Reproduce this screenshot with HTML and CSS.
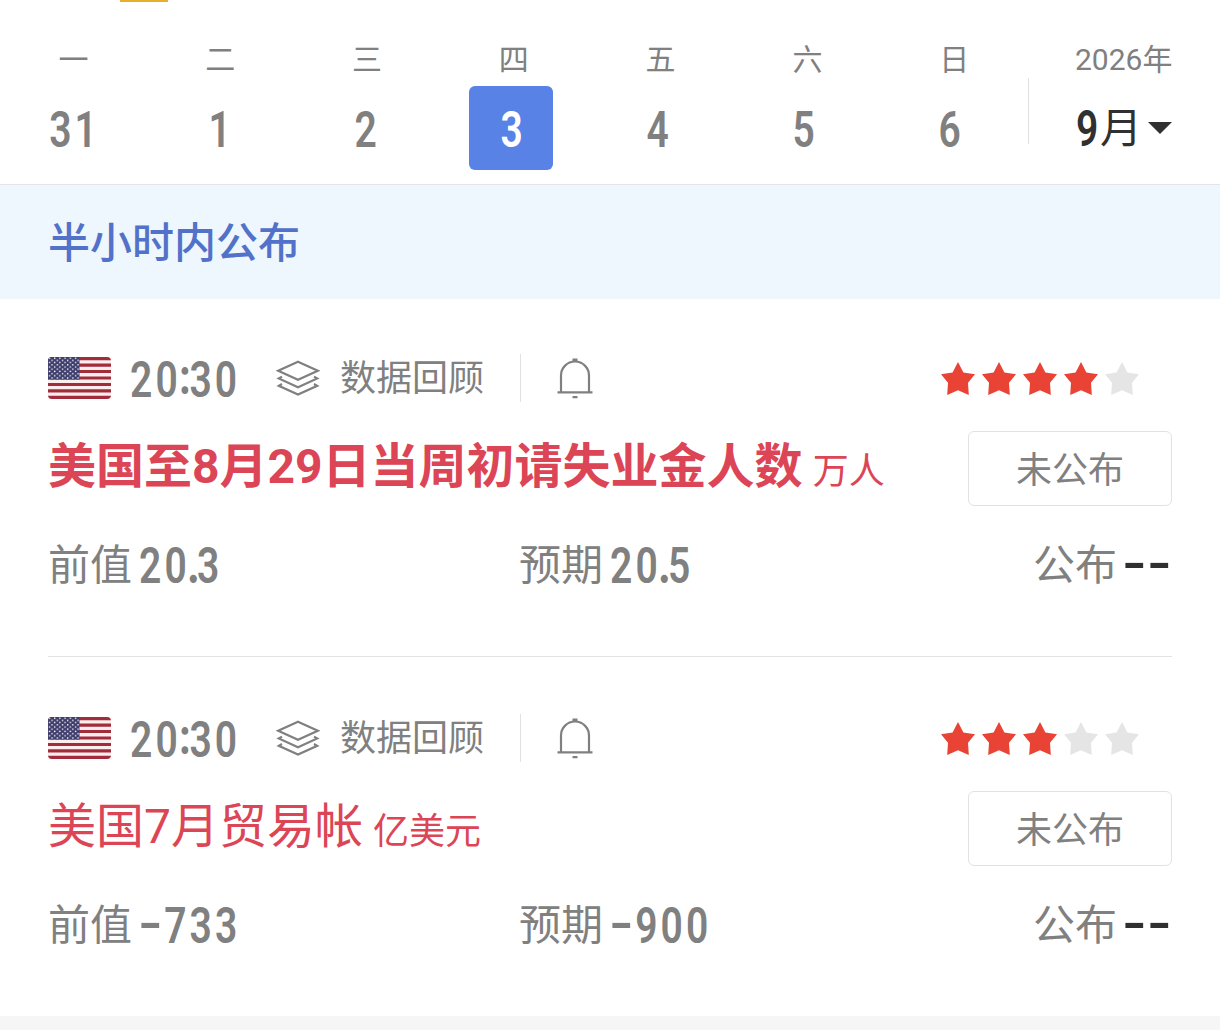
FILE: index.html
```html
<!DOCTYPE html>
<html lang="zh-CN">
<head>
<meta charset="utf-8">
<title>财经日历</title>
<link rel="stylesheet" href="styles.css">
</head>
<body>
<svg class="defs" width="0" height="0" aria-hidden="true">
  <defs>
    <pattern id="dots" width="5.2" height="4.4" patternUnits="userSpaceOnUse">
      <circle cx="1.5" cy="1.2" r=".8" fill="#fff"/><circle cx="4.1" cy="3.4" r=".8" fill="#fff"/>
    </pattern>
    <symbol id="flag" viewBox="0 0 63 42">
      <rect width="63" height="42" fill="#fdeeee"/>
      <path d="M0 1.6H63M0 8.1H63M0 14.5H63M0 21H63M0 27.5H63M0 33.9H63M0 40.4H63" stroke="#a02c3c" stroke-width="3.23"/>
      <rect width="31.5" height="22.6" fill="#3e3d6c"/>
      <rect width="31.5" height="22.6" fill="url(#dots)"/>
    </symbol>
    <symbol id="layers" viewBox="0 0 44 36">
      <g fill="none" stroke="#808080" stroke-width="2.2">
        <path d="M22 1.8L41.8 10.8L22 19.8L2.2 10.8Z"/>
        <path d="M6 16.6L2.8 18.4L22 27.2L41.2 18.4L38 16.6"/>
        <path d="M6 24L2.8 25.8L22 34.6L41.2 25.8L38 24"/>
      </g>
    </symbol>
    <symbol id="bell" viewBox="0 0 36 41">
      <path d="M4 34V17.5A14 14 0 0 1 32 17.5V34M.5 34.3H35.5" fill="none" stroke="#808080" stroke-width="2.2"/>
      <path d="M15.5 .5H20.5V3.5H15.5ZM15.5 38H20.5V40.3H15.5Z" fill="#808080"/>
    </symbol>
    <symbol id="star" viewBox="0 0 34 33">
      <path d="M17 0L22.4 10.6L34 12.2L27 20.8L27.8 33L17 28.2L6.2 33L7 20.8L0 12.2L11.6 10.6Z"/>
    </symbol>
  </defs>
</svg>

<header class="calendar">
  <div class="tab-line"></div>
  <div class="week">
    <div class="weekdays"><span>一</span><span>二</span><span>三</span><span>四</span><span>五</span><span>六</span><span>日</span></div>
    <div class="dates">
      <span class="date"><b class="num">31</b></span>
      <span class="date"><b class="num">1</b></span>
      <span class="date"><b class="num">2</b></span>
      <span class="date active"><b class="num">3</b></span>
      <span class="date"><b class="num">4</b></span>
      <span class="date"><b class="num">5</b></span>
      <span class="date"><b class="num">6</b></span>
    </div>
  </div>
  <div class="rule"></div>
  <div class="month">
    <div class="year">2026年</div>
    <div class="pick"><b class="num">9</b><span class="yue">月</span><i class="caret"></i></div>
  </div>
</header>

<h2 class="banner">半小时内公布</h2>

<main>
  <article class="event">
    <div class="meta">
      <svg class="flag"><use href="#flag"/></svg>
      <b class="num time">20<span class="colon">:</span>30</b>
      <svg class="layers"><use href="#layers"/></svg>
      <span class="review">数据回顾</span>
      <i class="sep"></i>
      <svg class="bell"><use href="#bell"/></svg>
      <div class="stars"><svg><use href="#star"/></svg><svg><use href="#star"/></svg><svg><use href="#star"/></svg><svg><use href="#star"/></svg><svg class="off"><use href="#star"/></svg></div>
    </div>
    <div class="headline">
      <h3 class="title strong">美国至8月29日当周初请失业金人数</h3><span class="unit">万人</span>
      <span class="status">未公布</span>
    </div>
    <div class="values">
      <div class="value prev"><span>前值</span><b class="num">20<span class="point">.</span>3</b></div>
      <div class="value"><span>预期</span><b class="num">20<span class="point">.</span>5</b></div>
      <div class="value actual"><span>公布</span><b class="num"><span class="dash">-</span><span class="dash">-</span></b></div>
    </div>
  </article>

  <article class="event">
    <div class="meta">
      <svg class="flag"><use href="#flag"/></svg>
      <b class="num time">20<span class="colon">:</span>30</b>
      <svg class="layers"><use href="#layers"/></svg>
      <span class="review">数据回顾</span>
      <i class="sep"></i>
      <svg class="bell"><use href="#bell"/></svg>
      <div class="stars"><svg><use href="#star"/></svg><svg><use href="#star"/></svg><svg><use href="#star"/></svg><svg class="off"><use href="#star"/></svg><svg class="off"><use href="#star"/></svg></div>
    </div>
    <div class="headline">
      <h3 class="title">美国7月贸易帐</h3><span class="unit">亿美元</span>
      <span class="status">未公布</span>
    </div>
    <div class="values">
      <div class="value prev"><span>前值</span><b class="num"><span class="dash">-</span>733</b></div>
      <div class="value"><span>预期</span><b class="num"><span class="dash">-</span>900</b></div>
      <div class="value actual"><span>公布</span><b class="num"><span class="dash">-</span><span class="dash">-</span></b></div>
    </div>
  </article>
</main>
<footer class="gap"></footer>
</body>
</html>
```
FILE: styles.css
```css
* { box-sizing: border-box; }

body {
  margin: 0;
  width: 1220px;
  height: 1030px;
  overflow: hidden;
  background: #fff;
  color: #808080;
  font-family: Roboto, "Noto Sans CJK SC", sans-serif;
}

h2, h3 { margin: 0; font-weight: 400; }
svg { display: block; flex: none; }
.defs { position: absolute; }

/* condensed figures */
.num {
  display: inline-block;
  font-size: 50px;
  line-height: 60px;
  font-weight: 650;
  letter-spacing: 4px;
  white-space: nowrap;
  transform: scaleX(.78);
  transform-origin: left center;
}

.calendar {
  position: relative;
  display: flex;
  height: 185px;
  border-bottom: 1px solid #e2e5ea;
}
.tab-line {
  position: absolute;
  left: 120px;
  top: 0;
  width: 48px;
  height: 2px;
  background: #e9ae2b;
}
.week { width: 1028px; }
.weekdays {
  display: grid;
  grid-template-columns: repeat(7, 146.8px);
  height: 86px;
  padding-top: 38px;
  font-size: 30px;
  line-height: 44px;
  text-align: center;
}
.dates {
  display: grid;
  grid-template-columns: repeat(7, 84px);
  column-gap: 62px;
  padding-left: 31px;
}
.date {
  display: flex;
  align-items: center;
  justify-content: center;
  height: 84px;
  padding-top: 4px;
  border-radius: 6px;
}
.date .num { transform-origin: center; margin-right: -4px; }
.active { background: #5982e6; color: #fff; }
.rule { width: 1px; height: 66px; margin-top: 78px; background: #e0e0e0; }
.month { padding: 38px 0 0 46px; }
.year { font-size: 30px; line-height: 44px; }
.pick {
  display: flex;
  align-items: center;
  height: 60px;
  margin-top: 17px;
  padding-left: 1px;
  color: #303030;
}
.pick .num { width: 24px; }
.yue { font-size: 42px; line-height: 60px; }
.caret {
  margin: -2px 0 0 6px;
  border: 12px solid transparent;
  border-top-color: #303030;
  border-bottom: 0;
}

.banner {
  height: 114px;
  padding-left: 48px;
  background: #eef6fe;
  color: #5271c8;
  font-size: 42px;
  line-height: 118px;
  font-weight: 500;
}

.event {
  height: 357px;
  margin: 0 48px;
  padding-top: 54px;
}
.event + .event { border-top: 1px solid #e3e3e3; height: 360px; padding-top: 56px; }

.meta { display: flex; align-items: center; height: 50px; }
.flag { width: 63px; height: 42px; border-radius: 4px; }
.time { width: 145px; margin-left: 19px; padding-top: 4px; }
.colon {
  display: inline-block;
  width: 11px;
  letter-spacing: 0;
  font-weight: 800;
  transform: translate(-2px, -3px);
}
.layers { width: 44px; height: 36px; margin-left: 1px; }
.review { margin-left: 20px; padding-top: 2px; font-size: 36px; line-height: 50px; }
.sep { width: 1px; height: 48px; margin-left: 36px; background: #e0e0e0; }
.bell { width: 36px; height: 41px; margin-left: 36px; }
.stars { display: flex; gap: 7px; margin: 0 33.5px 0 auto; fill: #e94335; }
.stars svg { width: 34px; height: 33px; }
.stars .off { fill: #e5e5e5; }

.headline {
  display: flex;
  align-items: baseline;
  height: 75px;
  margin-top: 28px;
  color: #dc4556;
}
.title { font-size: 48px; line-height: 72px; }
.strong { font-weight: 700; }
.unit { margin-left: 10px; font-size: 36px; transform: translateY(1px); }
.status {
  align-self: flex-start;
  width: 204px;
  height: 75px;
  margin-left: auto;
  border: 1px solid #e2e2e2;
  border-radius: 6px;
  color: #808080;
  font-size: 36px;
  line-height: 79px;
  text-align: center;
}

.values { display: flex; height: 60px; margin-top: 28px; }
.value {
  display: flex;
  align-items: center;
  width: 514px;
  padding-top: 3px;
  font-size: 42px;
  line-height: 60px;
  white-space: nowrap;
}
.value .num { margin-left: 7px; }
.prev { width: 471px; }
.actual { width: 139px; }
.actual .num { margin-left: 6px; color: #303030; }
.point { margin-left: -3px; letter-spacing: -3px; font-weight: 900; }
.dash {
  display: inline-block;
  width: 32.3px;
  letter-spacing: 0;
  transform: translate(-1px, -2px) scaleX(1.7);
  transform-origin: left center;
}

.gap { height: 14px; background: #f6f6f6; }
```
